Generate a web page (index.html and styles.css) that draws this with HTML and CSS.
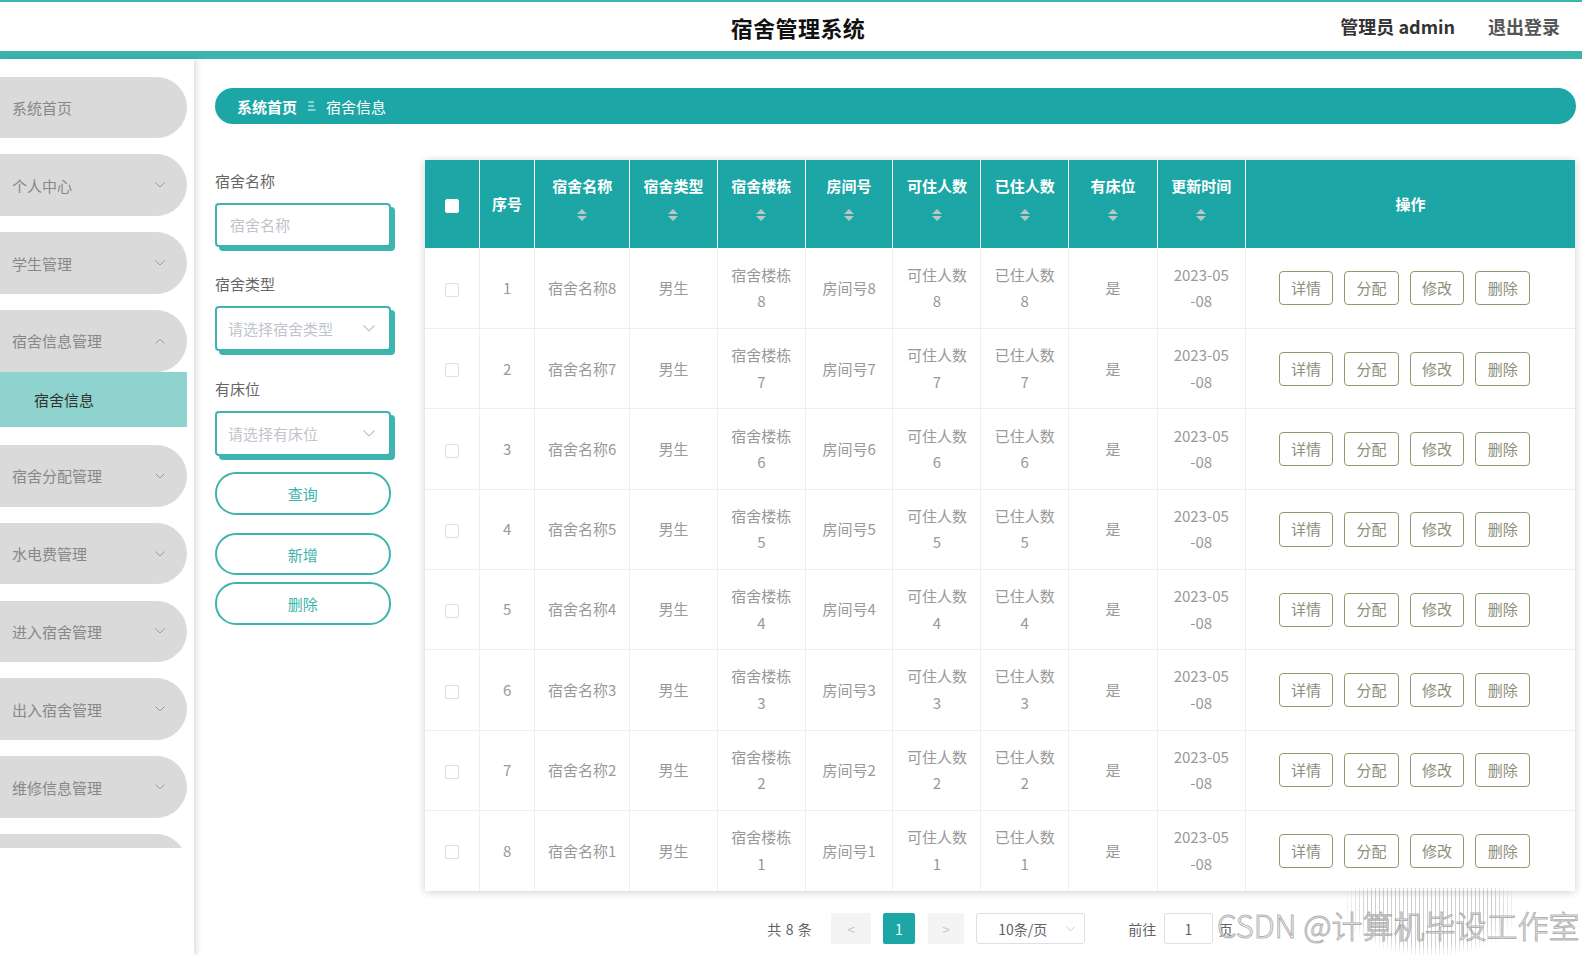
FILE: index.html
```html
<!DOCTYPE html>
<html lang="zh-CN">
<head>
<meta charset="utf-8">
<title>宿舍管理系统</title>
<link rel="stylesheet" href="styles.css">
</head>
<body>
<header class="top">
  <div class="top-title">宿舍管理系统</div>
  <div class="top-right">
    <span class="top-user">管理员 admin</span>
    <span class="top-logout">退出登录</span>
  </div>
</header>
<div class="layout">
  <aside class="sidebar">
    <div class="menu">
      <div class="menu-item"><span>系统首页</span></div>
      <div class="menu-item"><span>个人中心</span><svg class="chev" viewBox="0 0 10 6"><polyline points="0.5,0.5 5,5 9.5,0.5"/></svg></div>
      <div class="menu-item"><span>学生管理</span><svg class="chev" viewBox="0 0 10 6"><polyline points="0.5,0.5 5,5 9.5,0.5"/></svg></div>
      <div class="menu-item open"><span>宿舍信息管理</span><svg class="chev" viewBox="0 0 10 6"><polyline points="0.5,5.5 5,1 9.5,5.5"/></svg></div>
      <div class="sub-item">宿舍信息</div>
      <div class="menu-item after-sub"><span>宿舍分配管理</span><svg class="chev" viewBox="0 0 10 6"><polyline points="0.5,0.5 5,5 9.5,0.5"/></svg></div>
      <div class="menu-item"><span>水电费管理</span><svg class="chev" viewBox="0 0 10 6"><polyline points="0.5,0.5 5,5 9.5,0.5"/></svg></div>
      <div class="menu-item"><span>进入宿舍管理</span><svg class="chev" viewBox="0 0 10 6"><polyline points="0.5,0.5 5,5 9.5,0.5"/></svg></div>
      <div class="menu-item"><span>出入宿舍管理</span><svg class="chev" viewBox="0 0 10 6"><polyline points="0.5,0.5 5,5 9.5,0.5"/></svg></div>
      <div class="menu-item"><span>维修信息管理</span><svg class="chev" viewBox="0 0 10 6"><polyline points="0.5,0.5 5,5 9.5,0.5"/></svg></div>
      <div class="menu-item"></div>
    </div>
  </aside>
  <main class="content">
    <div class="crumb">
      <span class="crumb-home">系统首页</span>
      <svg class="crumb-sep" viewBox="0 0 8 10"><line x1="0.5" y1="1" x2="6" y2="1"/><line x1="0.5" y1="5" x2="6" y2="5"/><line x1="0" y1="9" x2="7.5" y2="9"/></svg>
      <span class="crumb-cur">宿舍信息</span>
    </div>
    <div class="work">
      <form class="search">
        <div class="field">
          <label class="field-label">宿舍名称</label>
          <div class="field-box"><span class="ph">宿舍名称</span></div>
        </div>
        <div class="field">
          <label class="field-label">宿舍类型</label>
          <div class="field-box select"><span class="ph">请选择宿舍类型</span><svg class="sel-arrow" viewBox="0 0 12 7"><polyline points="0.5,0.5 6,6 11.5,0.5"/></svg></div>
        </div>
        <div class="field">
          <label class="field-label">有床位</label>
          <div class="field-box select"><span class="ph">请选择有床位</span><svg class="sel-arrow" viewBox="0 0 12 7"><polyline points="0.5,0.5 6,6 11.5,0.5"/></svg></div>
        </div>
        <div class="btn-pill btn-query">查询</div>
        <div class="btn-pill btn-add">新增</div>
        <div class="btn-pill btn-del">删除</div>
      </form>
      <section class="table-area">
        <div class="table-card">
          <table class="grid">
            <colgroup>
              <col class="c-check"><col class="c-idx"><col class="c-name"><col class="c-std"><col class="c-std"><col class="c-std"><col class="c-std"><col class="c-std"><col class="c-bed"><col class="c-std"><col>
            </colgroup>
            <thead>
              <tr>
                <th><span class="cb cb-head"></span></th>
                <th>序号</th>
                <th><div class="th-t">宿舍名称</div><span class="sort"><i class="up"></i><i class="down"></i></span></th>
                <th><div class="th-t">宿舍类型</div><span class="sort"><i class="up"></i><i class="down"></i></span></th>
                <th><div class="th-t">宿舍楼栋</div><span class="sort"><i class="up"></i><i class="down"></i></span></th>
                <th><div class="th-t">房间号</div><span class="sort"><i class="up"></i><i class="down"></i></span></th>
                <th><div class="th-t">可住人数</div><span class="sort"><i class="up"></i><i class="down"></i></span></th>
                <th><div class="th-t">已住人数</div><span class="sort"><i class="up"></i><i class="down"></i></span></th>
                <th><div class="th-t">有床位</div><span class="sort"><i class="up"></i><i class="down"></i></span></th>
                <th><div class="th-t">更新时间</div><span class="sort"><i class="up"></i><i class="down"></i></span></th>
                <th>操作</th>
              </tr>
            </thead>
            <tbody>
              <tr><td><span class="cb"></span></td><td>1</td><td>宿舍名称8</td><td>男生</td><td>宿舍楼栋<br>8</td><td>房间号8</td><td>可住人数<br>8</td><td>已住人数<br>8</td><td>是</td><td>2023-05<br>-08</td><td><div class="ops"><span class="op">详情</span><span class="op">分配</span><span class="op">修改</span><span class="op">删除</span></div></td></tr>
              <tr><td><span class="cb"></span></td><td>2</td><td>宿舍名称7</td><td>男生</td><td>宿舍楼栋<br>7</td><td>房间号7</td><td>可住人数<br>7</td><td>已住人数<br>7</td><td>是</td><td>2023-05<br>-08</td><td><div class="ops"><span class="op">详情</span><span class="op">分配</span><span class="op">修改</span><span class="op">删除</span></div></td></tr>
              <tr><td><span class="cb"></span></td><td>3</td><td>宿舍名称6</td><td>男生</td><td>宿舍楼栋<br>6</td><td>房间号6</td><td>可住人数<br>6</td><td>已住人数<br>6</td><td>是</td><td>2023-05<br>-08</td><td><div class="ops"><span class="op">详情</span><span class="op">分配</span><span class="op">修改</span><span class="op">删除</span></div></td></tr>
              <tr><td><span class="cb"></span></td><td>4</td><td>宿舍名称5</td><td>男生</td><td>宿舍楼栋<br>5</td><td>房间号5</td><td>可住人数<br>5</td><td>已住人数<br>5</td><td>是</td><td>2023-05<br>-08</td><td><div class="ops"><span class="op">详情</span><span class="op">分配</span><span class="op">修改</span><span class="op">删除</span></div></td></tr>
              <tr><td><span class="cb"></span></td><td>5</td><td>宿舍名称4</td><td>男生</td><td>宿舍楼栋<br>4</td><td>房间号4</td><td>可住人数<br>4</td><td>已住人数<br>4</td><td>是</td><td>2023-05<br>-08</td><td><div class="ops"><span class="op">详情</span><span class="op">分配</span><span class="op">修改</span><span class="op">删除</span></div></td></tr>
              <tr><td><span class="cb"></span></td><td>6</td><td>宿舍名称3</td><td>男生</td><td>宿舍楼栋<br>3</td><td>房间号3</td><td>可住人数<br>3</td><td>已住人数<br>3</td><td>是</td><td>2023-05<br>-08</td><td><div class="ops"><span class="op">详情</span><span class="op">分配</span><span class="op">修改</span><span class="op">删除</span></div></td></tr>
              <tr><td><span class="cb"></span></td><td>7</td><td>宿舍名称2</td><td>男生</td><td>宿舍楼栋<br>2</td><td>房间号2</td><td>可住人数<br>2</td><td>已住人数<br>2</td><td>是</td><td>2023-05<br>-08</td><td><div class="ops"><span class="op">详情</span><span class="op">分配</span><span class="op">修改</span><span class="op">删除</span></div></td></tr>
              <tr><td><span class="cb"></span></td><td>8</td><td>宿舍名称1</td><td>男生</td><td>宿舍楼栋<br>1</td><td>房间号1</td><td>可住人数<br>1</td><td>已住人数<br>1</td><td>是</td><td>2023-05<br>-08</td><td><div class="ops"><span class="op">详情</span><span class="op">分配</span><span class="op">修改</span><span class="op">删除</span></div></td></tr>
            </tbody>
          </table>
        </div>
        <div class="pager">
          <span class="pg-total">共 8 条</span>
          <span class="pg-btn pg-prev">&lt;</span>
          <span class="pg-num">1</span>
          <span class="pg-btn pg-next">&gt;</span>
          <span class="pg-size">10条/页<svg class="pg-arrow" viewBox="0 0 10 6"><polyline points="0.5,0.5 5,5 9.5,0.5"/></svg></span>
          <span class="pg-goto">前往</span>
          <span class="pg-input">1</span>
          <span class="pg-unit">页</span>
        </div>
      </section>
    </div>
  </main>
</div>
<div class="watermark">
  <div class="wm-stripes"></div>
  <div class="wm-text">CSDN @计算机毕设工作室</div>
</div>
</body>
</html>
```

FILE: styles.css
```css
* { box-sizing: border-box; }
html, body { margin: 0; padding: 0; }
body {
  width: 1582px;
  height: 955px;
  overflow: hidden;
  background: #fff;
  font-family: "Noto Sans CJK SC", "Microsoft YaHei", "Liberation Sans", sans-serif;
  color: #333;
  position: relative;
}

/* header */
.top {
  height: 59px;
  border-top: 2px solid #3db4ad;
  border-bottom: 8.5px solid #3db4ad;
  display: flex;
  align-items: center;
  justify-content: center;
  padding-left: 14px;
  position: relative;
  background: #fff;
}
.top-title {
  font-size: 22px;
  font-weight: 700;
  color: #111;
  letter-spacing: 0.4px;
}
.top-right {
  position: absolute;
  right: 22px;
  top: 0;
  height: 48.5px;
  display: flex;
  align-items: center;
  gap: 33px;
  font-size: 18px;
  font-weight: 700;
}
.top-user { color: #333; }
.top-logout { color: #555; }

/* layout */
.layout {
  display: flex;
  height: 896px;
}
.sidebar {
  width: 194px;
  flex: 0 0 194px;
  background: #fff;
  box-shadow: 3px 0 6px rgba(0, 0, 0, 0.13);
  position: relative;
  z-index: 1;
}
.menu {
  height: 788.5px;
  overflow: hidden;
  padding-top: 17.7px;
}
.menu-item {
  width: 217px;
  height: 61.5px;
  margin-left: -30px;
  margin-bottom: 16.3px;
  border-radius: 31px;
  background: #dadada;
  display: flex;
  align-items: center;
  padding-left: 42px;
  padding-right: 22px;
  font-size: 15px;
  color: #888;
  justify-content: space-between;
}
.menu-item.open { margin-bottom: 0; }
.menu-item.after-sub { margin-top: 18px; }
.chev {
  width: 10px;
  height: 6px;
  fill: none;
  stroke: #999;
  stroke-width: 1;
}
.sub-item {
  width: 187px;
  height: 55px;
  margin-top: 0.5px;
  background: #8fd3cf;
  color: #333;
  font-size: 15px;
  display: flex;
  align-items: center;
  padding-left: 34px;
}

/* content */
.content {
  flex: 1;
  padding: 29px 6px 0 21px;
  min-width: 0;
}
.crumb {
  height: 36.3px;
  border-radius: 18px;
  background: #1ca7a6;
  display: flex;
  align-items: center;
  padding-left: 22px;
  color: #fff;
  font-size: 15px;
}
.crumb-home { font-weight: 700; }
.crumb-sep {
  width: 8px;
  height: 10px;
  margin: 0 10px 0 11px;
  stroke: #fff;
  stroke-width: 1;
  fill: none;
}
.work {
  display: flex;
  margin-top: 35.3px;
  gap: 29.3px;
}

/* search form */
.search {
  width: 180.5px;
  flex: 0 0 180.5px;
  padding-top: 10px;
  margin: 0;
}
.field { margin-bottom: 26.5px; }
.field:nth-child(2) { margin-bottom: 27.5px; }
.field:nth-child(3) { margin-bottom: 16.5px; }
.field-label {
  display: block;
  height: 22px;
  line-height: 22px;
  font-size: 15px;
  color: #666;
  margin-bottom: 11px;
}
.field-box {
  width: 175.5px;
  height: 44.4px;
  border: 2px solid #3db4ad;
  border-radius: 4px;
  box-shadow: 4px 4px 0 #3db4ad;
  background: #fff;
  display: flex;
  align-items: center;
  padding-left: 13px;
  padding-right: 14px;
  justify-content: space-between;
  font-size: 15px;
}
.ph { color: #c0c4cc; }
.select .ph { margin-left: -2px; }
.sel-arrow {
  width: 12px;
  height: 7px;
  fill: none;
  stroke: #c0c4cc;
  stroke-width: 1.2;
}
.btn-pill {
  width: 175.5px;
  height: 42.4px;
  border: 2px solid #3db4ad;
  border-radius: 21px;
  color: #3db4ad;
  font-size: 15px;
  display: flex;
  align-items: center;
  justify-content: center;
  background: #fff;
}
.btn-add { margin-top: 18.2px; }
.btn-del { margin-top: 7px; }

/* table */
.table-area {
  width: 1150.4px;
  flex: 0 0 1150.4px;
}
.table-card {
  box-shadow: 0 1px 8px rgba(0, 0, 0, 0.2);
  background: #fff;
}
.grid {
  width: 1150.4px;
  border-collapse: collapse;
  table-layout: fixed;
}
.c-check { width: 54.5px; }
.c-idx { width: 55.5px; }
.c-name { width: 94.8px; }
.c-std { width: 87.8px; }
.c-bed { width: 88.8px; }
.grid th {
  height: 88.8px;
  background: #1ca7a6;
  color: #fff;
  font-size: 15px;
  font-weight: 700;
  text-align: center;
  vertical-align: middle;
  border-right: 1px solid #fff;
  padding: 0 4px;
}
.grid th:last-child { border-right: none; }
.th-t {
  line-height: 20px;
  margin-top: -11px;
}
.sort {
  display: flex;
  flex-direction: column;
  align-items: center;
  gap: 2px;
  margin-top: 13.3px;
}
.sort i {
  display: block;
  width: 0;
  height: 0;
  border-left: 5px solid transparent;
  border-right: 5px solid transparent;
}
.sort .up { border-bottom: 5px solid #b8c6c6; }
.sort .down { border-top: 5px solid #b8c6c6; }
.grid td {
  height: 80.3px;
  text-align: center;
  vertical-align: middle;
  font-size: 15px;
  line-height: 26.6px;
  color: #999;
  border-right: 1px solid #ebeef5;
  border-bottom: 1px solid #ebeef5;
  padding: 0 6px;
}
.grid td:last-child { border-right: none; }
.grid tr:last-child td { border-bottom: none; }
.cb {
  display: inline-block;
  width: 14px;
  height: 14px;
  border: 1px solid #dcdfe6;
  border-radius: 2px;
  background: #fff;
  vertical-align: middle;
}
.cb-head { border-color: #fff; }
.ops {
  display: flex;
  gap: 11.1px;
  padding-left: 27px;
  align-items: center;
}
.op {
  width: 54.5px;
  height: 34.3px;
  border: 1px solid #8c9c6c;
  border-radius: 4px;
  color: #8e8e7a;
  font-size: 15px;
  display: flex;
  align-items: center;
  justify-content: center;
  background: #fff;
}

/* pager */
.pager {
  margin-top: 22.2px;
  height: 31.3px;
  display: flex;
  align-items: center;
  justify-content: center;
  font-size: 14px;
  color: #606266;
  padding-right: 0;
}
.pg-total { margin-right: 19px; letter-spacing: 0.6px; }
.pg-btn {
  width: 39.3px;
  height: 31.3px;
  background: #f4f4f5;
  color: #c0c4cc;
  display: flex;
  align-items: center;
  justify-content: center;
  border-radius: 2px;
}
.pg-next { width: 36.3px; }
.pg-num {
  width: 32.3px;
  height: 31.3px;
  margin: 0 13px 0 12px;
  background: #1ca7a6;
  color: #fff;
  display: flex;
  align-items: center;
  justify-content: center;
  border-radius: 2px;
}
.pg-size {
  width: 109px;
  height: 31.3px;
  margin-left: 12px;
  border: 1px solid #dcdfe6;
  border-radius: 3px;
  display: flex;
  align-items: center;
  padding-left: 21px;
  padding-right: 9px;
  justify-content: space-between;
  color: #606266;
}
.pg-arrow {
  width: 9px;
  height: 6px;
  fill: none;
  stroke: #c0c4cc;
  stroke-width: 1;
}
.pg-goto { margin-left: 43px; }
.pg-input {
  width: 48.4px;
  height: 31.3px;
  margin-left: 8px;
  border: 1px solid #dcdfe6;
  border-radius: 3px;
  display: flex;
  align-items: center;
  justify-content: center;
}
.pg-unit { margin-left: 6px; }

/* watermark overlay */
.watermark {
  position: absolute;
  left: 1210px;
  top: 885px;
  width: 372px;
  height: 70px;
  pointer-events: none;
}
.wm-stripes {
  position: absolute;
  left: 137px;
  top: 3px;
  width: 168px;
  height: 67px;
  background: repeating-linear-gradient(90deg, rgba(150, 150, 150, 0.45) 0 1px, transparent 1px 4px);
  -webkit-mask-image: radial-gradient(ellipse at 50% 30%, #000 55%, transparent 75%);
  mask-image: radial-gradient(ellipse at 50% 30%, #000 55%, transparent 75%);
}
.wm-text {
  position: absolute;
  left: 7px;
  top: 21px;
  font-size: 31px;
  line-height: 38px;
  color: rgba(255, 255, 255, 0.6);
  -webkit-text-stroke: 1px rgba(150, 150, 150, 0.75);
  white-space: nowrap;
  font-family: "Noto Sans CJK SC", "Liberation Sans", sans-serif;
  font-weight: 300;
}
```
